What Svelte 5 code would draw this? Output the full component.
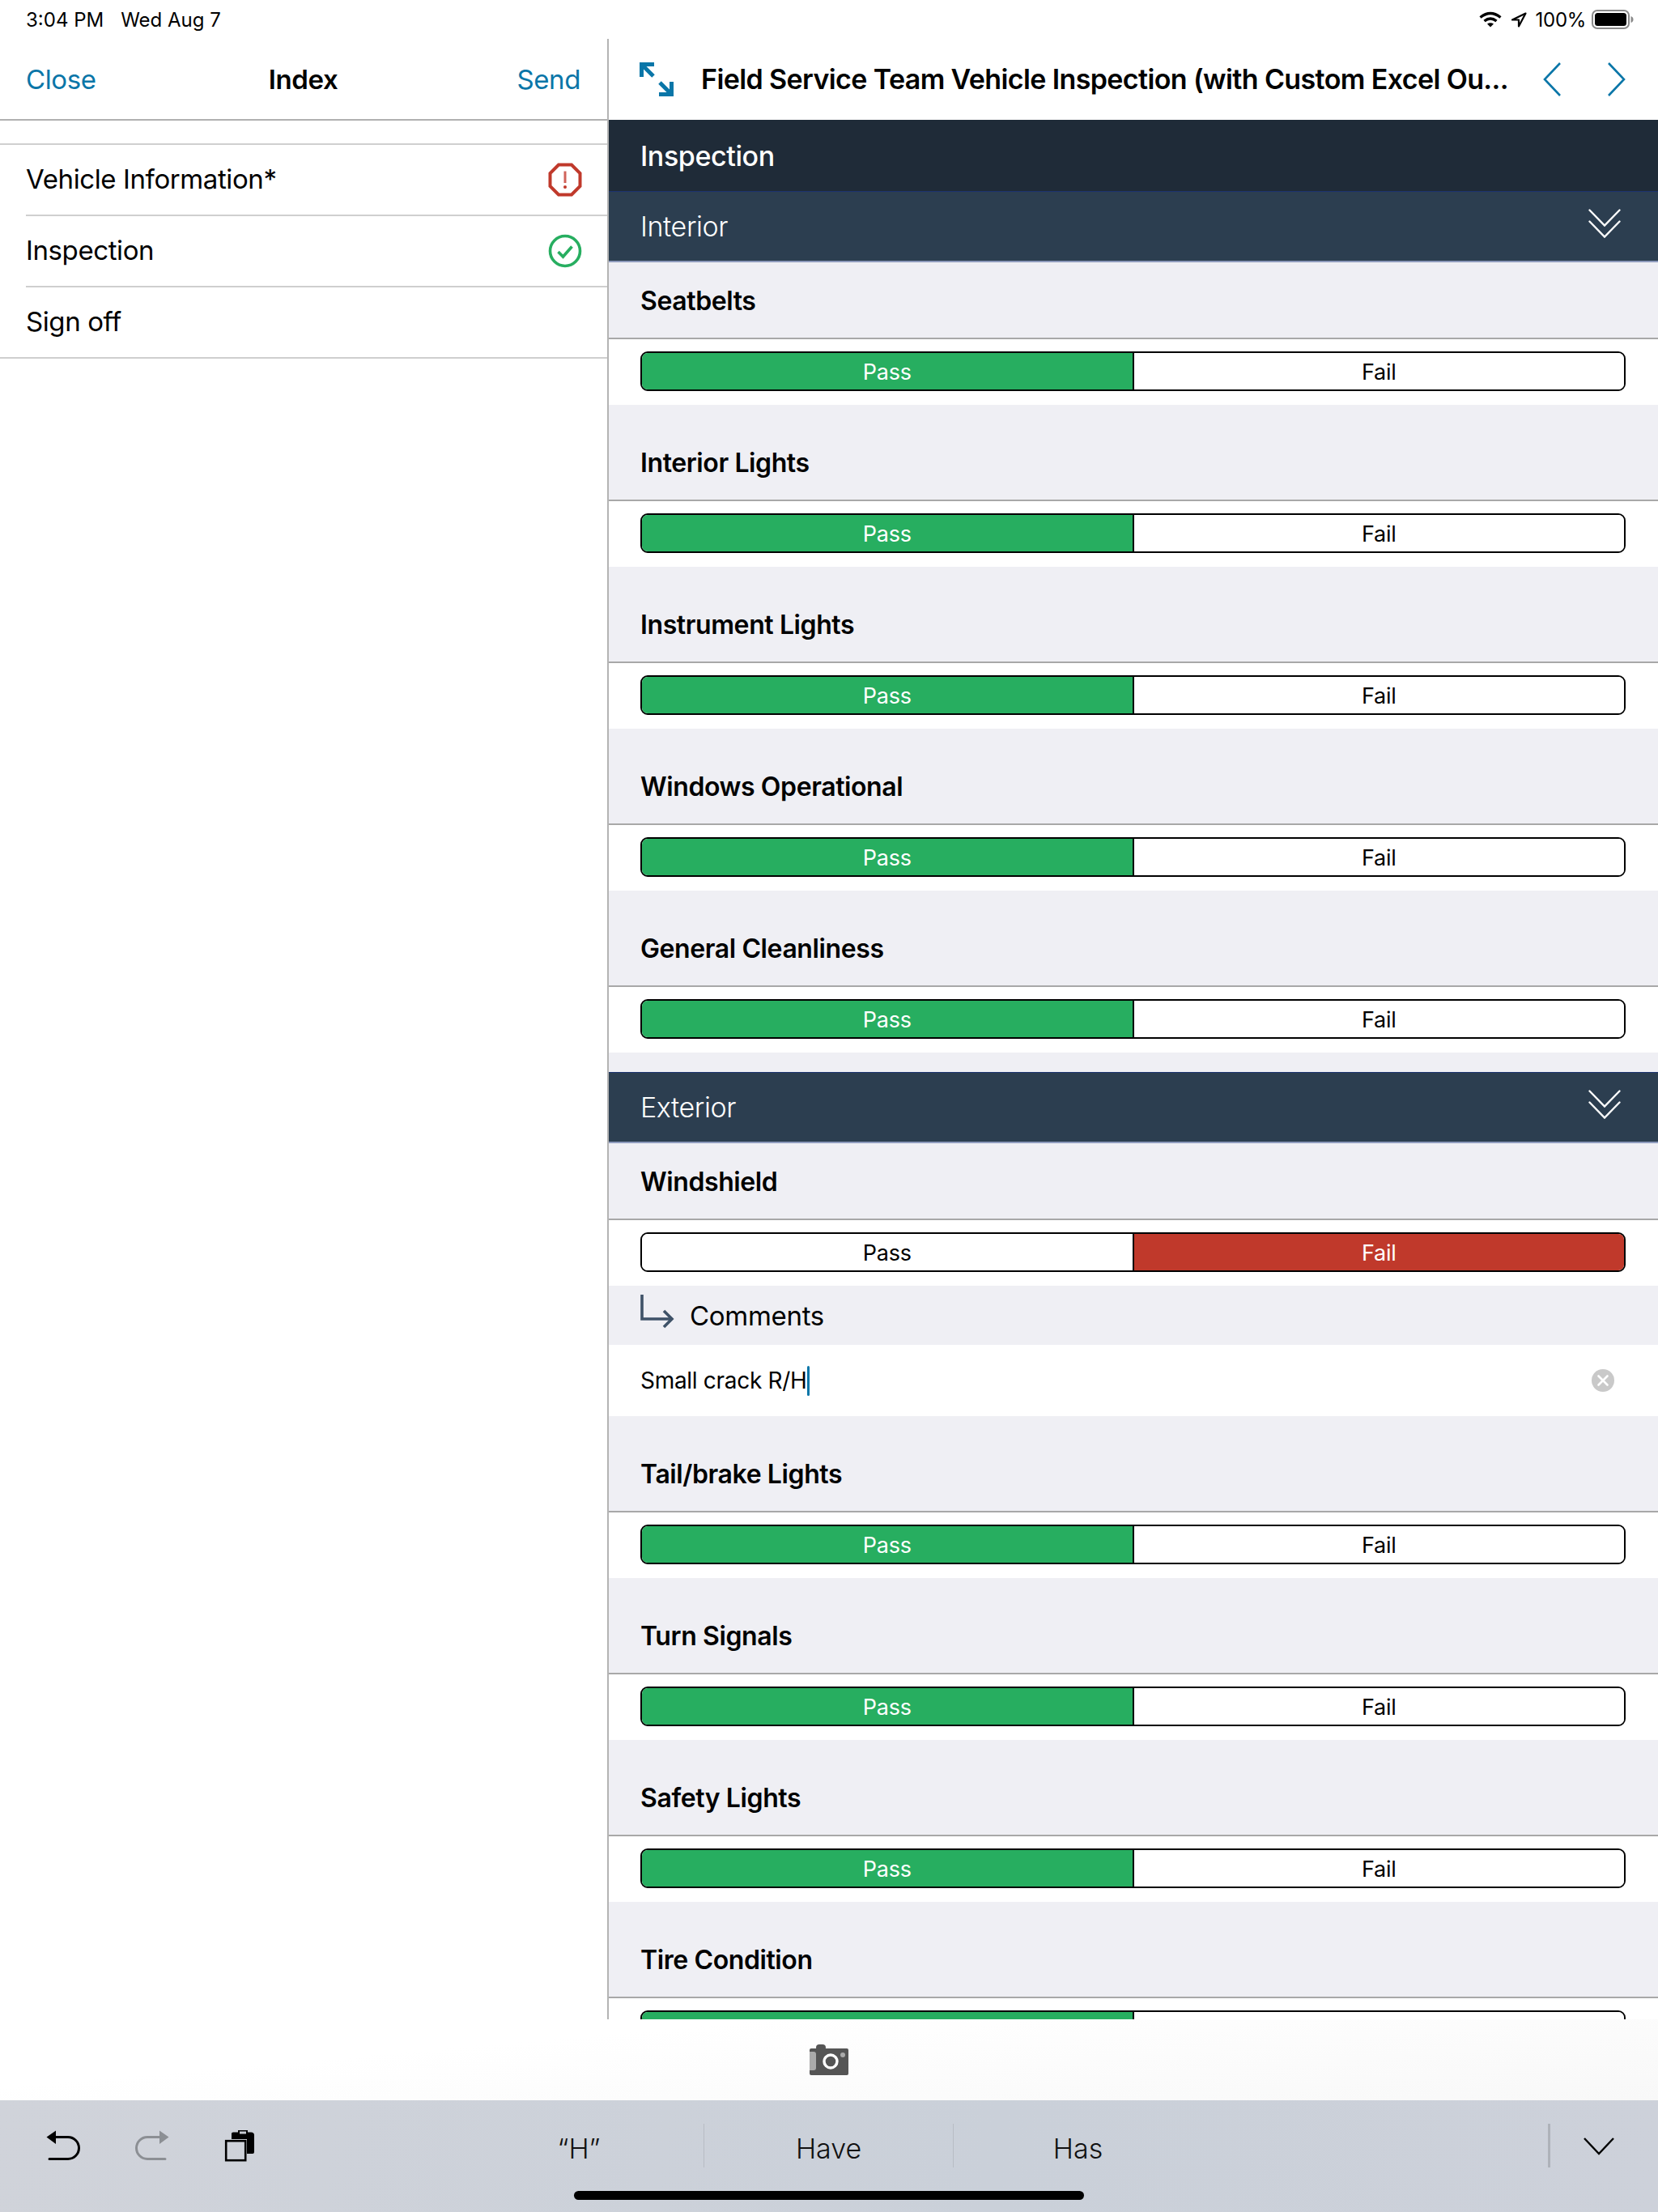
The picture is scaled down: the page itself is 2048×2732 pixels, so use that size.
<script>
  const interior = ['Seatbelts', 'Interior Lights', 'Instrument Lights', 'Windows Operational', 'General Cleanliness'];
  const exteriorAfter = ['Tail/brake Lights', 'Turn Signals', 'Safety Lights'];
</script>

{#snippet chevrons()}
  <svg class="dbl" width="40" height="36" viewBox="0 0 40 36" fill="none" stroke="#fff" stroke-width="2.4" stroke-linecap="round">
    <path d="M1.5 1.5 L20 20.5 L38.5 1.5" />
    <path d="M1.5 15.5 L20 34.5 L38.5 15.5" />
  </svg>
{/snippet}

{#snippet toggle(failed)}
  <div class="row">
    <div class="toggle">
      <div class="opt" class:pass={!failed}>Pass</div>
      <div class="opt" class:fail={failed}>Fail</div>
    </div>
  </div>
{/snippet}

{#snippet label(text)}
  <div class="label">{text}</div>
{/snippet}

<div class="app">
  <div class="status">
    <div class="clock"><span>3:04 PM</span><span>Wed Aug 7</span></div>
    <div class="sys">
      <svg width="28" height="20" viewBox="0 0 28 20" fill="none" stroke="#000" stroke-width="3.4">
        <path d="M1.5 7.5 Q14 -2.5 26.5 7.5" />
        <path d="M6.5 12 Q14 6 21.5 12" />
        <path d="M10 15.5 Q14 13 18 15.5 L14 19.5 Z" fill="#000" stroke="none" />
      </svg>
      <svg class="loc" width="20" height="19" viewBox="0 0 20 19" fill="none" stroke="#000" stroke-width="2.2" stroke-linejoin="round">
        <path d="M18.5 1.5 L2 9.5 L10 9.5 L10 17.5 Z" />
      </svg>
      <span class="pct">100%</span>
      <svg class="batt" width="52" height="24" viewBox="0 0 52 24">
        <rect x="1" y="1" width="45" height="22" rx="6" fill="none" stroke="#8a8a8a" stroke-width="2" />
        <rect x="4" y="4" width="39" height="16" rx="3.5" fill="#000" />
        <path d="M48.5 8 Q51.5 9 51.5 12 Q51.5 15 48.5 16 Z" fill="#8a8a8a" />
      </svg>
    </div>
  </div>

  <div class="body">
    <aside class="left">
      <nav class="lnav">
        <span class="link">Close</span>
        <span class="idx">Index</span>
        <span class="link">Send</span>
      </nav>
      <div class="list">
        <div class="li">
          <span>Vehicle Information*</span>
          <svg width="42" height="42" viewBox="0 0 42 42" fill="none">
            <path d="M13 2.5 H29 L39.5 13 V29 L29 39.5 H13 L2.5 29 V13 Z" stroke="#c0392b" stroke-width="4" />
            <path d="M21 10.5 V25" stroke="#d0635a" stroke-width="3" />
            <circle cx="21" cy="30" r="2" fill="#c0392b" />
          </svg>
        </div>
        <div class="li">
          <span>Inspection</span>
          <svg width="42" height="42" viewBox="0 0 42 42" fill="none">
            <circle cx="21" cy="21" r="18.5" stroke="#27ae60" stroke-width="3.6" />
            <path d="M12.5 22 L18.5 28 L29.5 15.5" stroke="#27ae60" stroke-width="3.6" />
          </svg>
        </div>
        <div class="li last"><span>Sign off</span></div>
      </div>
    </aside>

    <main class="right">
      <header class="rnav">
        <svg class="expand" width="42" height="42" viewBox="0 0 42 42" fill="none" stroke="#0a76a8" stroke-width="5">
          <path d="M2.5 18 V2.5 H18" />
          <path d="M3.5 3.5 L17 17" />
          <path d="M39.5 24 V39.5 H24" />
          <path d="M38.5 38.5 L25 25" />
        </svg>
        <div class="title">Field Service Team Vehicle Inspection (with Custom Excel Ou...</div>
        <div class="arrows">
          <svg width="24" height="42" viewBox="0 0 24 42" fill="none" stroke="#0a76a8" stroke-width="2.6"><path d="M21 1 L2 21 L21 41" /></svg>
          <svg width="24" height="42" viewBox="0 0 24 42" fill="none" stroke="#0a76a8" stroke-width="2.6"><path d="M3 1 L22 21 L3 41" /></svg>
        </div>
      </header>

      <div class="scroll">
        <div class="page">Inspection</div>

        <div class="sec-head"><span>Interior</span>{@render chevrons()}</div>
        <section class="sec">
          {#each interior as text}
            <div class="item">
              {@render label(text)}
              {@render toggle(false)}
            </div>
          {/each}
        </section>

        <div class="sec-head"><span>Exterior</span>{@render chevrons()}</div>
        <section class="sec">
          <div class="item">
            {@render label('Windshield')}
            {@render toggle(true)}
            <div class="comments">
              <svg width="42" height="42" viewBox="0 0 42 42" fill="none" stroke="#3f5268" stroke-width="3.6">
                <path d="M2 0 V30 H38" />
                <path d="M29 20 L39 30 L29 40" />
              </svg>
              <span>Comments</span>
            </div>
            <div class="input">
              <span class="typed">Small crack R/H</span><i class="caret"></i>
              <svg class="clear" width="28" height="28" viewBox="0 0 28 28">
                <circle cx="14" cy="14" r="14" fill="#c9c9c9" />
                <path d="M8.5 8.5 L19.5 19.5 M19.5 8.5 L8.5 19.5" stroke="#fff" stroke-width="2.6" stroke-linecap="round" />
              </svg>
            </div>
          </div>
          {#each exteriorAfter as text}
            <div class="item">
              {@render label(text)}
              {@render toggle(false)}
            </div>
          {/each}
          <div class="item">
            {@render label('Tire Condition')}
            <div class="row">
              <div class="toggle">
                <div class="opt pass"></div>
                <div class="opt"></div>
              </div>
            </div>
          </div>
        </section>
      </div>
    </main>
  </div>

  <div class="accessory">
    <svg width="48" height="38" viewBox="0 0 48 38">
      <rect x="8" y="0" width="12" height="8" rx="4" fill="#555" />
      <rect x="0" y="5" width="48" height="33" rx="2" fill="#555" />
      <path d="M0 9 H5 Q8 9 8 12 V29 Q8 32 5 32 H0 Z" fill="#aaa" />
      <circle cx="26" cy="21" r="8" fill="none" stroke="#fff" stroke-width="3.4" />
      <circle cx="41" cy="13" r="3" fill="#aaa" />
    </svg>
  </div>

  <div class="keyboard">
    <div class="kb-row">
      <div class="tools">
        <svg width="44" height="38" viewBox="0 0 44 38" fill="none" stroke="#000" stroke-width="3" stroke-linecap="round">
          <path d="M10 8.5 H27 A13.5 13.5 0 0 1 27 35.5 H4" />
          <path d="M0.5 8.5 L12 0.5 V17 Z" fill="#000" stroke="none" />
        </svg>
        <svg width="44" height="38" viewBox="0 0 44 38" fill="none" stroke="#8c8f94" stroke-width="3" stroke-linecap="round">
          <path d="M34 8.5 H17 A13.5 13.5 0 0 0 17 35.5 H39" />
          <path d="M43.5 8.5 L32 0.5 V17 Z" fill="#8c8f94" stroke="none" />
        </svg>
        <svg width="38" height="40" viewBox="0 0 38 40">
          <path d="M9 5 Q9 3.5 11 3.5 H17 V1 H29 V3.5 H33 Q37 3.5 37 7 V28 Q37 30 35 30 H28 V12 H9 Z" fill="#000" />
          <rect x="19" y="2.5" width="8" height="3" fill="#c8ccd3" />
          <rect x="2.2" y="14.2" width="24" height="24" fill="none" stroke="#000" stroke-width="2.6" />
        </svg>
      </div>
      <div class="sugg">
        <span>“H”</span>
        <span class="sep">Have</span>
        <span class="sep">Has</span>
      </div>
      <div class="hide">
        <svg width="38" height="22" viewBox="0 0 38 22" fill="none" stroke="#000" stroke-width="2.4"><path d="M1 1 L19 20 L37 1" /></svg>
      </div>
    </div>
    <div class="homebar"></div>
  </div>
</div>

<style>
  :global(body) { margin: 0; background: #fff; }
  .app {
    width: 2048px; height: 2732px; display: flex; flex-direction: column; overflow: hidden;
    font-family: Inter, "Liberation Sans", sans-serif; color: #000; background: #fff;
  }
  .status {
    height: 48px; flex: none; display: flex; justify-content: space-between; align-items: center;
    padding: 0 30px 0 32px; font-size: 24px; letter-spacing: 0;
  }
  .clock { display: flex; gap: 21px; }
  .sys { display: flex; align-items: center; }
  .loc { margin-left: 11px; }
  .pct { margin-left: 11px; letter-spacing: -0.3px; }
  .batt { margin-left: 7px; }

  .body { flex: 1; min-height: 0; display: flex; overflow: hidden; }
  .left { width: 752px; flex: none; box-sizing: border-box; border-right: 2px solid #b4b4b4; }
  .lnav {
    height: 101px; box-sizing: border-box; border-bottom: 2px solid #b0b0b0; padding: 2px 33px 1px 32px;
    display: flex; justify-content: space-between; align-items: center; font-size: 33px; letter-spacing: -0.4px;
  }
  .link { color: #0a76a8; }
  .idx { font-weight: 600; margin-right: 8px; }
  .list { margin-top: 28px; border-top: 2px solid #cfcfcf; font-size: 33px; letter-spacing: -0.4px; }
  .li {
    height: 88px; box-sizing: border-box; margin-left: 32px; padding-right: 31px; border-bottom: 2px solid #cfcfcf;
    display: flex; align-items: center; justify-content: space-between;
  }
  .li span { margin-top: -3px; }
  .li.last { margin-left: 0; padding-left: 32px; }

  .right { flex: 1; min-width: 0; display: flex; flex-direction: column; }
  .rnav { height: 100px; flex: none; display: flex; align-items: center; padding: 0 40px 0 38px; }
  .expand { flex: none; }
  .title { flex: 1; margin-left: 34px; margin-top: -2px; font-size: 34px; font-weight: 600; letter-spacing: -0.61px; white-space: nowrap; }
  .arrows { display: flex; gap: 54px; }

  .scroll { flex: 1; min-height: 0; overflow: hidden; background: #efeff4; }
  .page {
    height: 88px; box-sizing: border-box; background: #1f2b38; color: #fff; padding: 0 39px;
    display: flex; align-items: center; font-size: 34px; font-weight: 500; letter-spacing: -0.4px;
  }
  .sec-head {
    height: 88px; box-sizing: border-box; background: #2c3e50; color: #fff; padding: 0 46px 0 39px;
    border-top: 1px solid #1d3470; border-bottom: 2px solid #8e9bbd;
    display: flex; align-items: center; justify-content: space-between; font-size: 34px; font-weight: 300; letter-spacing: -0.4px;
  }
  .dbl { margin-bottom: 8px; }
  .sec { padding-bottom: 24px; }
  .item + .item { margin-top: 24px; }
  .label {
    height: 93px; box-sizing: border-box; padding: 2px 39px 0; display: flex; align-items: center;
    font-size: 32px; font-weight: 600; letter-spacing: -0.4px;
  }
  .row { height: 83px; box-sizing: border-box; background: #fff; border-top: 2px solid #a8a8a8; padding: 15px 40px 17px 39px; }
  .toggle {
    height: 49px; box-sizing: border-box; display: flex; border: 2px solid #000; border-radius: 9px; overflow: hidden;
    font-size: 27px; letter-spacing: -0.2px;
  }
  .opt { flex: 1; display: flex; align-items: center; justify-content: center; background: #fff; padding-top: 2px; }
  .opt + .opt { border-left: 2px solid #000; }
  .pass { background: #27ae60; color: #fff; }
  .fail { background: #c0392b; color: #fff; }

  .comments { height: 73px; display: flex; align-items: center; padding: 0 39px; gap: 19px; font-size: 33px; letter-spacing: -0.3px; }
  .comments svg { margin-top: -10px; flex: none; }
  .input { height: 88px; background: #fff; display: flex; align-items: center; padding: 0 54px 0 39px; font-size: 28px; letter-spacing: -0.3px; }
  .typed { margin-top: -1px; }
  .caret { display: block; width: 3px; height: 37px; background: #0a76a8; border-radius: 2px; margin-left: 0; }
  .clear { margin-left: auto; }

  .accessory {
    height: 100px; flex: none; display: flex; align-items: center; justify-content: center;
    background: linear-gradient(175deg, #ffffff 30%, #f8f8f8 100%);
  }
  .keyboard {
    height: 138px; flex: none; background: linear-gradient(100deg, #d0d3da, #cad0d9 60%, #cdd1da);
    display: flex; flex-direction: column; padding: 29px 0 15px;
    box-sizing: border-box;
  }
  .kb-row { flex: 1; display: flex; align-items: flex-start; min-height: 0; }
  .tools { width: 504px; box-sizing: border-box; padding: 8px 0 0 57px; display: flex; gap: 64px; flex: none; }
  .tools svg:last-child { margin-left: 4px; margin-top: -1px; }
  .sugg { display: grid; grid-template-columns: repeat(3, 308px); height: 54px; font-size: 34px; font-weight: 300; text-align: center; align-items: center; width: 924px; margin-left: 57px; }
  .sugg span { line-height: 54px; padding-top: 4px; box-sizing: border-box; height: 54px; color: #111; }
  .sugg .sep { border-left: 1.5px solid #b8bcc4; }
  .hide { margin-left: auto; width: 136px; height: 54px; box-sizing: border-box; border-left: 3px solid #aeb2b9; padding: 17px 0 0 41px; }
  .homebar { height: 11px; width: 630px; align-self: center; background: #000; border-radius: 6px; flex: none; }
</style>
